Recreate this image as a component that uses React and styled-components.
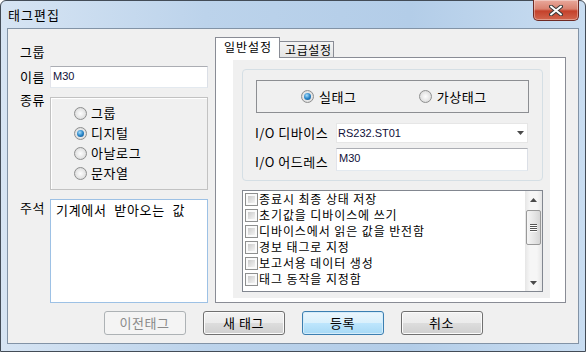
import styled, { createGlobalStyle, css } from "styled-components";

const KO = `"Noto Sans CJK KR", "Noto Sans", sans-serif`;
const LAT = `"Liberation Sans", Arial, sans-serif`;

const GlobalStyle = createGlobalStyle`
  html, body { margin: 0; padding: 0; background: #fff; }
  body { font-family: ${KO}; font-size: 13px; color: #000; }
  * { box-sizing: border-box; }
`;

const Window = styled.div`
  width: 586px;
  height: 352px;
  display: flex;
  flex-direction: column;
  padding: 0 6px 7px;
  border: 1px solid #434c57;
  border-radius: 6px 6px 0 0;
  background: linear-gradient(90deg, #d6e4f3 0%, #bcd3eb 35%, #b3cde8 70%, #c9ddf1 100%);
`;

const TitleBar = styled.div`
  height: 27px;
  display: flex;
  align-items: flex-start;
`;

const Title = styled.span`
  margin: 5px 0 0 1px;
  font-size: 13px;
  letter-spacing: 1px;
  line-height: 18px;
`;

const CloseButton = styled.div`
  margin: -1px 0 0 auto;
  width: 46px;
  height: 21px;
  display: flex;
  align-items: center;
  justify-content: center;
  border: 1px solid #6e2a24;
  border-top: none;
  border-radius: 0 0 5px 5px;
  background: linear-gradient(#e9a99c 0%, #d9816f 45%, #c4412b 55%, #d2664e 100%);
  box-shadow: inset 0 0 0 1px rgba(255, 255, 255, 0.35);
`;

const Client = styled.div`
  flex: 1;
  display: flex;
  flex-direction: column;
  background: #f0f0f0;
  border: 1px solid #8293a6;
  padding: 8px 12px;
`;

const Body = styled.div`
  display: grid;
  grid-template-columns: 188px 351px;
  column-gap: 7px;
  height: 266px;
`;

const LeftPane = styled.div`
  display: flex;
  flex-direction: column;
`;

const FieldRow = styled.div`
  display: grid;
  grid-template-columns: 30px 158px;
  margin-top: ${(p) => p.$gap}px;
  height: ${(p) => p.$h}px;
`;

const FieldLabel = styled.div`
  font-size: 13px;
  letter-spacing: 0.5px;
  line-height: ${(p) => p.$lh || 22}px;
  margin-top: ${(p) => p.$offset || 0}px;
  white-space: nowrap;
`;

const TextBox = styled.div`
  height: ${(p) => p.$h || 22}px;
  background: #fff;
  border: 1px solid;
  border-color: #abadb3 #dbdfe6 #e3e9ef #e2e3ea;
  font-family: ${LAT};
  font-size: 11px;
  line-height: ${(p) => (p.$h || 22) - 4}px;
  padding: 0 2px;
  color: #10103a;
`;

const TypeBox = styled.div`
  border: 1px solid #c2c2c2;
  box-shadow: inset 1px 1px 0 #fff;
  padding: 5px 0 0 23px;
`;

const RadioRow = styled.div`
  height: 20px;
  line-height: 20px;
  display: flex;
  align-items: center;
  gap: 4px;
  letter-spacing: 0.6px;
  white-space: nowrap;
`;

const RadioDot = styled.span`
  position: relative;
  flex: none;
  width: 13px;
  height: 13px;
  border-radius: 50%;
  border: 1px solid #8e8f8f;
  background: radial-gradient(circle at 50% 50%, #fdfdfd 0%, #e6e6e6 55%, #cdcdcd 100%);
  ${(p) =>
    p.$checked &&
    css`
      &::after {
        content: "";
        position: absolute;
        left: 2px;
        top: 2px;
        width: 7px;
        height: 7px;
        border-radius: 50%;
        background: radial-gradient(circle at 40% 35%, #a8ddfb 0%, #2a86c8 50%, #0d4a86 100%);
      }
    `}
`;

const MemoBox = styled.div`
  background: #fff;
  border: 1px solid #9dc1e5;
  padding: 2px 5px;
  font-size: 13px;
  line-height: 16px;
  letter-spacing: 0.7px;
  word-spacing: 4px;
  white-space: nowrap;
`;

const TabControl = styled.div`
  display: flex;
  flex-direction: column;
`;

const TabStrip = styled.div`
  height: 20px;
  display: flex;
  align-items: flex-end;
  position: relative;
  z-index: 1;
`;

const Tab = styled.div`
  border: 1px solid #898c95;
  border-bottom: none;
  font-size: 12px;
  line-height: 15px;
  white-space: nowrap;
  ${(p) =>
    p.$active
      ? css`
          width: 65px;
          height: 21px;
          margin-bottom: -1px;
          padding: 1px 0 0 8px;
          letter-spacing: 1px;
          background: #fff;
        `
      : css`
          width: 54px;
          height: 16px;
          border-left: none;
          padding: 0 0 0 5px;
          letter-spacing: 0.6px;
          background: linear-gradient(#f4f4f4, #e4e4e4);
        `}
`;

const TabPanel = styled.div`
  flex: 1;
  display: flex;
  border: 1px solid #898c95;
  background: #fff;
  padding: 2px 15px 4px 17px;
`;

const Page = styled.div`
  flex: 1;
  display: flex;
  flex-direction: column;
  background: #f0f0f0;
  padding: 9px 7px 0 9px;
`;

const OptionsGroup = styled.div`
  height: 112px;
  border: 1px solid #d5dfe5;
  border-radius: 4px;
  padding: 10px 13px 9px;
  display: flex;
  flex-direction: column;
`;

const KindBox = styled.div`
  height: 33px;
  border: 1px solid #8c8e92;
  display: flex;
  align-items: center;
  padding-left: 44px;
  gap: 62px;
`;

const KindOption = styled.div`
  display: flex;
  align-items: center;
  gap: 5px;
  line-height: 16px;
  letter-spacing: 0.6px;
`;

const SettingRow = styled.div`
  display: grid;
  grid-template-columns: 80px 192px;
  margin-top: ${(p) => p.$gap}px;
  height: ${(p) => p.$h}px;
`;

const SettingLabel = styled.div`
  margin-left: -1px;
  font-size: 13px;
  letter-spacing: 0.5px;
  line-height: ${(p) => p.$lh}px;
  white-space: nowrap;
`;

const ComboBox = styled.div`
  height: 20px;
  background: #fff;
  border: 1px solid #e6e6e6;
  display: flex;
  align-items: center;
  justify-content: space-between;
  padding: 0 3px 0 1px;
  font-family: ${LAT};
  font-size: 11px;
  color: #10103a;
`;

const ListBox = styled.div`
  margin-top: 9px;
  height: 102px;
  border: 1px solid #828790;
  background: #fff;
  display: flex;
`;

const ListItems = styled.div`
  flex: 1;
  padding-left: 2px;
`;

const ListItem = styled.div`
  height: 16px;
  line-height: 16px;
  display: flex;
  align-items: center;
  gap: 1px;
  font-size: 12px;
  letter-spacing: 0.9px;
  white-space: nowrap;
`;

const CheckBox = styled.span`
  flex: none;
  width: 13px;
  height: 13px;
  border: 1px solid #8e8f8f;
  padding: 2px;
  background: linear-gradient(135deg, #cbcbcb, #f3f3f3) content-box, #fafafa;
`;

const ScrollBar = styled.div`
  width: 17px;
  display: flex;
  flex-direction: column;
  align-items: center;
  background: linear-gradient(90deg, #e6e6e6, #f6f6f6 30%, #f6f6f6 70%, #e6e6e6);
`;

const ScrollArrow = styled.div`
  height: 17px;
  width: 17px;
  display: flex;
  align-items: center;
  justify-content: center;
`;

const ScrollThumb = styled.div`
  margin-top: 2px;
  width: 15px;
  height: 35px;
  border: 1px solid #999;
  border-radius: 2px;
  background: linear-gradient(90deg, #f5f5f5, #e4e4e4 60%, #d6d6d6);
  display: flex;
  align-items: center;
  justify-content: center;
`;

const ScrollSpacer = styled.div`
  flex: 1;
`;

const ButtonRow = styled.div`
  margin-top: 8px;
  height: 24px;
  display: flex;
  justify-content: center;
  gap: 17px;
`;

const Button = styled.div`
  width: 82px;
  height: 24px;
  border: 1px solid #707070;
  border-radius: 3px;
  display: flex;
  align-items: center;
  justify-content: center;
  font-size: 13px;
  line-height: 16px;
  letter-spacing: 0.5px;
  background: linear-gradient(#f2f2f2 0%, #ebebeb 50%, #dddddd 50%, #cfcfcf 100%);
  box-shadow: inset 0 0 0 1px #fbfbfb;
  ${(p) =>
    p.$variant === "default" &&
    css`
      border-color: #3c7fb1;
      background: linear-gradient(#eaf6fd 0%, #d9f0fc 50%, #bee6fd 50%, #a7d9f5 100%);
      box-shadow: inset 0 0 0 1px #d4ecfa;
    `}
  ${(p) =>
    p.$variant === "disabled" &&
    css`
      border-color: #adb2b5;
      background: #f4f4f4;
      box-shadow: none;
      color: #8a8a8a;
    `}
`;

const Arrow = ({ up }) => (
  <svg width="7" height="4" viewBox="0 0 7 4">
    <path d={up ? "M0 4 L3.5 0 L7 4 Z" : "M0 0 L7 0 L3.5 4 Z"} fill="#4a4a4a" />
  </svg>
);

const Grip = () => (
  <svg width="7" height="8" viewBox="0 0 7 8">
    {[0, 2, 4, 6].map((y) => (
      <g key={y}>
        <rect x="0" y={y} width="7" height="1" fill="#555" />
        <rect x="0" y={y + 1} width="7" height="1" fill="#fff" />
      </g>
    ))}
  </svg>
);

const CloseGlyph = () => (
  <svg width="14" height="11" viewBox="0 0 14 11">
    <path d="M2 1.5 L12 9.5 M12 1.5 L2 9.5" stroke="#3a3a3a" strokeWidth="4" strokeLinecap="round" />
    <path d="M2 1.5 L12 9.5 M12 1.5 L2 9.5" stroke="#fff" strokeWidth="2" strokeLinecap="round" />
  </svg>
);

const options = [
  "종료시 최종 상태 저장",
  "초기값을 디바이스에 쓰기",
  "디바이스에서 읽은 값을 반전함",
  "경보 태그로 지정",
  "보고서용 데이터 생성",
  "태그 동작을 지정함",
];

const kinds = [
  { label: "그룹", checked: false },
  { label: "디지털", checked: true },
  { label: "아날로그", checked: false },
  { label: "문자열", checked: false },
];

export default function App() {
  return (
    <>
      <GlobalStyle />
      <Window>
        <TitleBar>
          <Title>태그편집</Title>
          <CloseButton>
            <CloseGlyph />
          </CloseButton>
        </TitleBar>
        <Client>
          <Body>
            <LeftPane>
              <FieldRow $gap={4} $h={22}>
                <FieldLabel>그룹</FieldLabel>
              </FieldRow>
              <FieldRow $gap={3} $h={22}>
                <FieldLabel>이름</FieldLabel>
                <TextBox>M30</TextBox>
              </FieldRow>
              <FieldRow $gap={9} $h={93}>
                <FieldLabel $lh={14} $offset={-4}>
                  종류
                </FieldLabel>
                <TypeBox>
                  {kinds.map((k) => (
                    <RadioRow key={k.label}>
                      <RadioDot $checked={k.checked} />
                      {k.label}
                    </RadioRow>
                  ))}
                </TypeBox>
              </FieldRow>
              <FieldRow $gap={9} $h={104}>
                <FieldLabel $lh={14} $offset={2}>
                  주석
                </FieldLabel>
                <MemoBox>기계에서 받아오는 값</MemoBox>
              </FieldRow>
            </LeftPane>

            <TabControl>
              <TabStrip>
                <Tab $active>일반설정</Tab>
                <Tab>고급설정</Tab>
              </TabStrip>
              <TabPanel>
                <Page>
                  <OptionsGroup>
                    <KindBox>
                      <KindOption>
                        <RadioDot $checked />
                        실태그
                      </KindOption>
                      <KindOption>
                        <RadioDot />
                        가상태그
                      </KindOption>
                    </KindBox>
                    <SettingRow $gap={10} $h={20}>
                      <SettingLabel $lh={20}>I/O 디바이스</SettingLabel>
                      <ComboBox>
                        RS232.ST01
                        <Arrow />
                      </ComboBox>
                    </SettingRow>
                    <SettingRow $gap={5} $h={23}>
                      <SettingLabel $lh={28}>I/O 어드레스</SettingLabel>
                      <TextBox $h={23}>M30</TextBox>
                    </SettingRow>
                  </OptionsGroup>
                  <ListBox>
                    <ListItems>
                      {options.map((o) => (
                        <ListItem key={o}>
                          <CheckBox />
                          {o}
                        </ListItem>
                      ))}
                    </ListItems>
                    <ScrollBar>
                      <ScrollArrow>
                        <Arrow up />
                      </ScrollArrow>
                      <ScrollThumb>
                        <Grip />
                      </ScrollThumb>
                      <ScrollSpacer />
                      <ScrollArrow>
                        <Arrow />
                      </ScrollArrow>
                    </ScrollBar>
                  </ListBox>
                </Page>
              </TabPanel>
            </TabControl>
          </Body>
          <ButtonRow>
            <Button $variant="disabled">이전태그</Button>
            <Button>새 태그</Button>
            <Button $variant="default">등록</Button>
            <Button>취소</Button>
          </ButtonRow>
        </Client>
      </Window>
    </>
  );
}
